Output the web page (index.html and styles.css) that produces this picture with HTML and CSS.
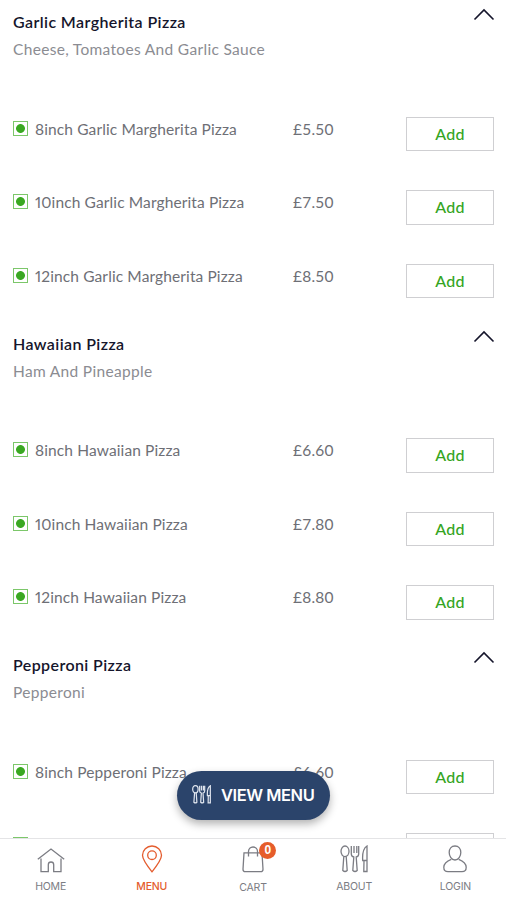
FILE: index.html
```html
<!DOCTYPE html>
<html lang="en">
<head>
    <meta charset="UTF-8">
    <meta name="viewport" content="width=device-width, initial-scale=1.0">
    <title>Menu</title>
    <link rel="stylesheet" href="styles.css">
</head>
<body>
    <svg class="sprite" width="0" height="0">
        <symbol id="chevron" viewBox="0 0 22 13"><path d="M1.5 11.500 11 2l9.500 9.500"/></symbol>
        <symbol id="cutlery" viewBox="0 0 28 28">
            <ellipse cx="5" cy="6.300" rx="4" ry="5.300"/>
            <path d="M3.800 11.500 2.800 25.500q2.200 2 4.400 0L6.200 11.500"/>
            <path d="M11.300 1v8q0 2.500 2.500 3l-1 13.500q2.200 2 4.400 0l-1-13.500q2.500-.5 2.500-3V1M14 1v7M16.800 1v7"/>
            <path d="M27 1v25.500h-3.200l.2-11h-1.300Q22 4 27 1zM24 15.500h3"/>
        </symbol>
    </svg>

    <main class="menu">
        <section class="category">
            <div class="category-head">
                <div>
                    <h2>Garlic Margherita Pizza</h2>
                    <p>Cheese, Tomatoes And Garlic Sauce</p>
                </div>
                <svg class="chevron"><use href="#chevron"/></svg>
            </div>
            <div class="item"><span class="veg"></span><span class="name">8inch Garlic Margherita Pizza</span><span class="price">£5.50</span><button class="add">Add</button></div>
            <div class="item"><span class="veg"></span><span class="name">10inch Garlic Margherita Pizza</span><span class="price">£7.50</span><button class="add">Add</button></div>
            <div class="item"><span class="veg"></span><span class="name">12inch Garlic Margherita Pizza</span><span class="price">£8.50</span><button class="add">Add</button></div>
        </section>
        <section class="category">
            <div class="category-head">
                <div>
                    <h2>Hawaiian Pizza</h2>
                    <p>Ham And Pineapple</p>
                </div>
                <svg class="chevron"><use href="#chevron"/></svg>
            </div>
            <div class="item"><span class="veg"></span><span class="name">8inch Hawaiian Pizza</span><span class="price">£6.60</span><button class="add">Add</button></div>
            <div class="item"><span class="veg"></span><span class="name">10inch Hawaiian Pizza</span><span class="price">£7.80</span><button class="add">Add</button></div>
            <div class="item"><span class="veg"></span><span class="name">12inch Hawaiian Pizza</span><span class="price">£8.80</span><button class="add">Add</button></div>
        </section>
        <section class="category">
            <div class="category-head">
                <div>
                    <h2>Pepperoni Pizza</h2>
                    <p>Pepperoni</p>
                </div>
                <svg class="chevron"><use href="#chevron"/></svg>
            </div>
            <div class="item"><span class="veg"></span><span class="name">8inch Pepperoni Pizza</span><span class="price">£6.60</span><button class="add">Add</button></div>
            <div class="item"><span class="veg"></span><span class="name"></span><span class="price"></span><button class="add"></button></div>
        </section>
    </main>

    <button class="view-menu">
        <svg><use href="#cutlery"/></svg>
        <span>VIEW MENU</span>
    </button>

    <nav class="tabbar">
        <a class="tab">
            <svg viewBox="0 0 28 28"><path d="M.8 14.300 14 4l13.200 10.300M4 13.500v13.200h7.300v-7q0-2.700 2.700-2.700t2.700 2.700v7H24V13.500"/></svg>
            <span>HOME</span>
        </a>
        <a class="tab active">
            <svg viewBox="0 0 28 28"><path d="M14 26.800Q4.500 15 4.500 10.300a9.500 9.300 0 0 1 19 0Q23.500 15 14 26.800z"/><circle cx="14" cy="10.200" r="4.300"/></svg>
            <span>MENU</span>
        </a>
        <a class="tab cart">
            <svg viewBox="0 0 28 28"><path d="M5 7.800h18l1 16.400q0 2.500-2.300 2.500H6.300q-2.300 0-2.300-2.500zM9.500 11.500V6.500a4.500 4.500 0 0 1 9 0v5"/></svg>
            <span>CART</span>
            <b class="badge">0</b>
        </a>
        <a class="tab">
            <svg><use href="#cutlery"/></svg>
            <span>ABOUT</span>
        </a>
        <a class="tab">
            <svg viewBox="0 0 28 28"><path d="M14 1c3.700 0 5.800 2.800 5.800 6.500S17.500 15 14 15s-5.800-3.800-5.800-7.500S10.300 1 14 1zM10.300 14.300C6 16 2.800 18 2.800 22.200q0 4.500 4.200 4.500h14q4.200 0 4.200-4.500c0-4.200-3.200-6.200-7.500-7.900"/></svg>
            <span>LOGIN</span>
        </a>
    </nav>
</body>
</html>
```
FILE: styles.css
```css
* {
    box-sizing: border-box;
}
body {
    margin: 0;
    height: 900px;
    overflow: hidden;
    display: flex;
    flex-direction: column;
    background: #fff;
    font-family: Lato, "Liberation Sans", sans-serif;
    position: relative;
}
.sprite {
    position: absolute;
}
svg {
    fill: none;
    stroke: currentColor;
}
.menu {
    height: 838px;
    overflow: hidden;
    padding: 0 12px 0 13px;
}
.category {
    height: 321.5px;
}
.category:first-child {
    margin-top: -4px;
}
.category-head {
    height: 101px;
    padding-top: 12px;
    display: flex;
    justify-content: space-between;
}
.category-head h2 {
    margin: 0;
    font-size: 16px;
    line-height: 27px;
    font-weight: 600;
    letter-spacing: 0.4px;
    color: #15152b;
}
.category-head p {
    margin: 0;
    font-size: 15.5px;
    line-height: 28px;
    letter-spacing: 0.32px;
    color: #8b8c92;
}
.chevron {
    width: 22px;
    height: 13px;
    margin-right: -1px;
    stroke-width: 1.6;
    color: #15152b;
}
.item {
    height: 73.5px;
    padding-top: 19.5px;
    display: flex;
    align-items: flex-start;
}
.veg {
    width: 15px;
    height: 15px;
    margin: 4.2px 7px 0 0;
    border: 1px solid #7cc76a;
    background: radial-gradient(circle, #3aa822 4px, transparent 4.8px);
}
.name,
.price {
    font-size: 15.5px;
    line-height: 25px;
    letter-spacing: 0.2px;
    color: #6e6f76;
}
.name {
    width: 258px;
    letter-spacing: 0.12px;
    font-variant-numeric: proportional-nums;
}
.price {
    flex: 1;
}
.add {
    width: 88px;
    height: 34.5px;
    padding: 0 0 1px;
    border: 1px solid #cfcfd2;
    background: #fff;
    font: 500 16px Lato, sans-serif;
    letter-spacing: 0.2px;
    color: #35a51f;
}
.view-menu {
    position: absolute;
    left: 177px;
    top: 771px;
    width: 153px;
    height: 49px;
    padding: 0 0 2px 15px;
    border: 0;
    border-radius: 25px;
    display: flex;
    align-items: center;
    gap: 10px;
    background: #2b446b;
    color: #fff;
    font: 600 16.5px Inter, sans-serif;
    letter-spacing: -0.45px;
    white-space: nowrap;
    box-shadow: 0 4px 9px rgba(0,0,0,0.3);
}
.view-menu svg {
    width: 19px;
    height: 19px;
    stroke-width: 1.8;
    color: #dfe5ee;
}
.tabbar {
    height: 62px;
    border-top: 1px solid #e4e4e6;
    display: grid;
    grid-template-columns: repeat(5, 1fr);
    background: #fff;
}
.tab {
    padding-top: 6px;
    display: flex;
    flex-direction: column;
    align-items: center;
    position: relative;
    color: #7b7c83;
}
.tab svg {
    width: 28px;
    height: 28px;
    stroke-width: 1.3;
}
.tab span {
    margin-top: 7px;
    font: 10.5px/14px Inter, sans-serif;
    letter-spacing: -0.2px;
}
.active {
    color: #e45c2e;
}
.active span {
    font-weight: 500;
}
.cart span {
    margin-top: 8px;
}
.badge {
    position: absolute;
    left: 57px;
    top: 3px;
    width: 17px;
    height: 17px;
    border-radius: 50%;
    background: #e65d2a;
    color: #fff;
    font: 700 12px/17px "Liberation Sans", sans-serif;
    text-align: center;
}
```
